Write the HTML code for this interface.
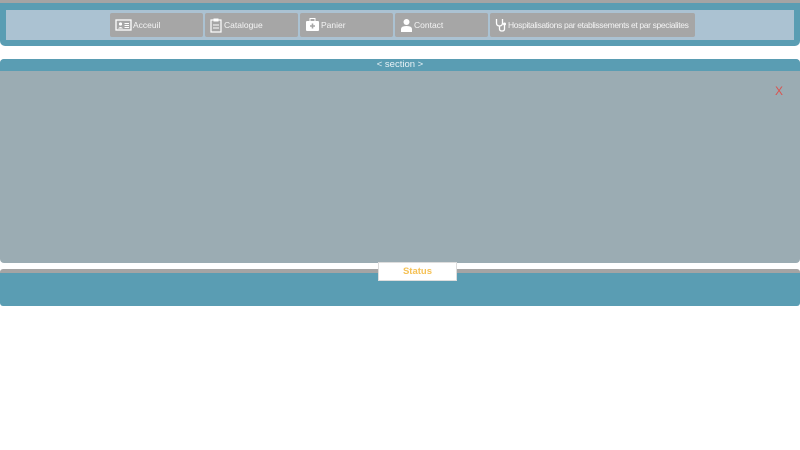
<!DOCTYPE html>
<html><head><style>
body{margin:0;width:800px;height:450px;background:#fff;font-family:"Liberation Sans",sans-serif;position:relative;overflow:hidden}
div{position:absolute;box-sizing:border-box}
.b{top:13px;height:24px;background:#a6a6a6;border-radius:2px;color:#f4f4f4;font-size:8.5px;line-height:24px;padding-left:23px;white-space:nowrap;overflow:hidden}
.b svg{position:absolute;left:5px;top:5px}
</style></head><body>
<div style="left:0;top:0;width:800px;height:4px;background:#a4a4a4"></div>
<div style="left:0;top:3px;width:800px;height:43px;background:#5a9db3;border-radius:0 0 5px 5px"></div>
<div style="left:6px;top:10px;width:788px;height:30px;background:#abc2d2"></div>
<div class="b" style="left:110px;width:93px"><svg width="17" height="14" viewBox="0 0 17 14"><rect x="1" y="2" width="15" height="10" fill="none" stroke="#fff" stroke-width="1.3"/><circle cx="5.5" cy="6" r="1.6" fill="#fff"/><path d="M3 10.5q2.5-3 5 0z" fill="#fff"/><path d="M9.5 5.5h4.5M9.5 7.5h4.5M9.5 9.5h4.5" stroke="#fff"/></svg>Acceuil</div>
<div class="b" style="left:205px;width:93px;padding-left:19px"><svg width="12" height="15" viewBox="0 0 12 15"><rect x="1" y="2" width="10" height="12" fill="none" stroke="#fff" stroke-width="1.2"/><rect x="3.5" y="0.5" width="5" height="3" fill="#fff"/><path d="M3 7h6M3 10h6" stroke="#fff"/></svg>Catalogue</div>
<div class="b" style="left:300px;width:93px;padding-left:21px"><svg width="15" height="14" viewBox="0 0 15 14"><rect x="1" y="3" width="13" height="10" rx="1" fill="#fff"/><rect x="5" y="0.5" width="5" height="3" fill="none" stroke="#fff"/><path d="M7.5 5.5v5M5 8h5" stroke="#a6a6a6" stroke-width="1.6"/></svg>Panier</div>
<div class="b" style="left:395px;width:93px;padding-left:19px"><svg width="13" height="15" viewBox="0 0 13 15"><circle cx="6.5" cy="4" r="3" fill="#fff"/><path d="M1 14v-3q0-3 5.5-3t5.5 3v3z" fill="#fff"/></svg>Contact</div>
<div class="b" style="left:490px;width:205px;padding-left:18px;letter-spacing:-0.35px"><svg width="13" height="14" viewBox="0 0 13 14"><path d="M1.5 1v4q0 3 3 3t3-3v-4M4.5 8v3q0 2 2.5 2t2.5-2v-4" fill="none" stroke="#fff" stroke-width="1.3"/><circle cx="9.5" cy="6" r="1.5" fill="#fff"/></svg>Hospitalisations par etablissements et par specialites</div>
<div style="left:0;top:59px;width:800px;height:204px;background:#9bacb3;border-radius:4px"></div>
<div style="left:0;top:59px;width:800px;height:12px;background:#5a9db3;border-radius:4px 4px 0 0;color:#e8f2f6;font-size:9.5px;line-height:12px;text-align:center">&lt; section &gt;</div>
<div style="left:775px;top:84px;color:#d9534f;font-size:12px">X</div>
<div style="left:0;top:269px;width:800px;height:37px;background:#5a9db3;border-radius:3px;border-top:4px solid #a4a4a4"></div>
<div style="left:378px;top:262px;width:79px;height:19px;background:#fff;border:1px solid #ddd;color:#f5c155;font-weight:bold;font-size:9.5px;line-height:17px;text-align:center">Status</div>
</body></html>
